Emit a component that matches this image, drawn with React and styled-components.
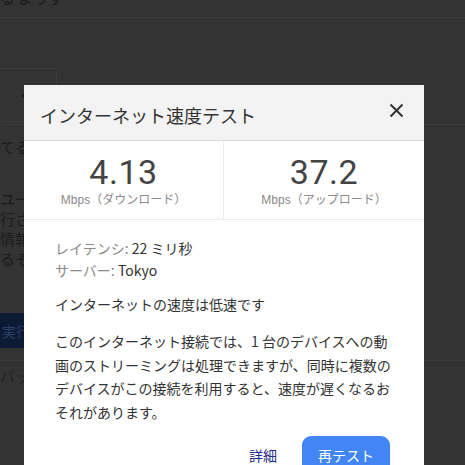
import React from "react"
import styled, { createGlobalStyle } from "styled-components"

const GlobalStyle = createGlobalStyle`
  html, body {
    margin: 0;
    padding: 0;
    background: #333333;
    overflow: hidden;
  }
  body {
    font-family: "Noto Sans CJK JP", "Liberation Sans", sans-serif;
  }
`

const Page = styled.div`
  width: 465px;
  height: 465px;
  position: relative;
  overflow: hidden;
  background: #333333;
  color: #1b1b1b;
  font-size: 15px;
`

const Rule = styled.div`
  height: 1px;
  background: #3b3b3b;
  margin-top: ${(p) => p.$top}px;
`

const GhostBox = styled.div`
  margin-top: 50px;
  width: 58px;
  height: 54px;
  margin-left: -1px;
  border: 1px solid #3c3c3c;
  border-radius: 3px;
  display: flex;
  align-items: center;
  padding-left: 22px;
  box-sizing: border-box;

  &::before {
    content: "";
    width: 3px;
    height: 3px;
    border-radius: 50%;
    background: #1b1b1b;
  }
`

const GhostText = styled.div`
  line-height: 20px;
  white-space: nowrap;
  margin-top: ${(p) => p.$top || 0}px;
  color: ${(p) => p.$color || "#1b1b1b"};
`

const GhostButton = styled.div`
  margin-top: 44px;
  width: 28px;
  height: 35px;
  background: #0c1b33;
  color: #2a3f66;
  display: flex;
  align-items: center;
  font-size: 14px;
  padding-left: 2px;
  box-sizing: border-box;
  white-space: nowrap;
  overflow: hidden;
`

const Dialog = styled.div`
  position: absolute;
  top: 85px;
  left: 24px;
  width: 400px;
  background: #ffffff;
  color: #333333;
`

const Header = styled.div`
  height: 56px;
  box-sizing: border-box;
  background: #f3f3f3;
  border-bottom: 1px solid #dadada;
  display: flex;
  align-items: center;
  justify-content: space-between;
  padding: 4px 20px 0 16px;
`

const Title = styled.h2`
  margin: 0;
  font-size: 18px;
  font-weight: 400;
  color: #333333;
  letter-spacing: 0;
`

const CloseButton = styled.button`
  border: none;
  background: none;
  padding: 0;
  width: 15px;
  height: 15px;
  margin-top: -8px;
  display: flex;
  cursor: pointer;
`

const Stats = styled.div`
  display: grid;
  grid-template-columns: 200px 200px;
  height: 79px;
  border-bottom: 1px solid #ebebeb;
  box-sizing: border-box;
`

const Stat = styled.div`
  display: flex;
  flex-direction: column;
  align-items: center;
  padding-top: 13px;
  border-right: ${(p) => (p.$divider ? "1px solid #ebebeb" : "none")};
`

const Value = styled.div`
  font-family: Roboto, "Liberation Sans", sans-serif;
  font-size: 34px;
  line-height: 36px;
  letter-spacing: 0.5px;
  color: #444444;
`

const Unit = styled.div`
  font-size: 12px;
  line-height: 18px;
  color: #8a8a8a;

  span {
    font-family: "Liberation Sans", sans-serif;
  }
`

const Body = styled.div`
  padding: 17px 34px 0 31px;
  font-size: 14px;
`

const InfoLine = styled.div`
  line-height: 22px;
  color: #333333;

  span {
    color: #8a8a8a;
  }
`

const Verdict = styled.p`
  margin: 12px 0 0;
  line-height: 23px;
`

const Paragraph = styled.p`
  margin: 14px 0 0;
  line-height: 23.5px;
  white-space: nowrap;
`

const Actions = styled.div`
  display: flex;
  justify-content: flex-end;
  align-items: center;
  gap: 25px;
  margin-top: 12px;
`

const LinkButton = styled.a`
  color: #1f2d86;
  font-size: 14px;
  text-decoration: none;
`

const PrimaryButton = styled.button`
  width: 88px;
  height: 38px;
  border: none;
  border-radius: 9px;
  background: #4285f4;
  color: #ffffff;
  font-family: "Noto Sans CJK JP", sans-serif;
  font-size: 14px;
`

const CloseIcon = () => (
  <svg width="15" height="15" viewBox="0 0 15 15">
    <path d="M1.5 1.5 L13.5 13.5 M13.5 1.5 L1.5 13.5" stroke="#333" strokeWidth="2" />
  </svg>
)

export default function App() {
  return (
    <>
      <GlobalStyle />
      <Page>
        <GhostText $top={-12}>る ようす</GhostText>
        <Rule $top={9} />
        <GhostBox />
        <Rule $top={2} />
        <GhostText $top={12}>てるラ</GhostText>
        <GhostText $top={32}>ユー</GhostText>
        <GhostText>行さ</GhostText>
        <GhostText>情報</GhostText>
        <GhostText>るそれ</GhostText>
        <GhostButton>実行</GhostButton>
        <Rule $top={12} />
        <GhostText $top={5} $color="#242424">
          バッ
        </GhostText>

        <Dialog>
          <Header>
            <Title>インターネット速度テスト</Title>
            <CloseButton aria-label="閉じる">
              <CloseIcon />
            </CloseButton>
          </Header>
          <Stats>
            <Stat $divider>
              <Value>4.13</Value>
              <Unit>
                <span>Mbps</span>（ダウンロード）
              </Unit>
            </Stat>
            <Stat>
              <Value>37.2</Value>
              <Unit>
                <span>Mbps</span>（アップロード）
              </Unit>
            </Stat>
          </Stats>
          <Body>
            <InfoLine>
              <span>レイテンシ:</span> 22 ミリ秒
            </InfoLine>
            <InfoLine>
              <span>サーバー:</span> Tokyo
            </InfoLine>
            <Verdict>インターネットの速度は低速です</Verdict>
            <Paragraph>
              このインターネット接続では、1 台のデバイスへの動
              <br />
              画のストリーミングは処理できますが、同時に複数の
              <br />
              デバイスがこの接続を利用すると、速度が遅くなるお
              <br />
              それがあります。
            </Paragraph>
            <Actions>
              <LinkButton href="#">詳細</LinkButton>
              <PrimaryButton>再テスト</PrimaryButton>
            </Actions>
          </Body>
        </Dialog>
      </Page>
    </>
  )
}
